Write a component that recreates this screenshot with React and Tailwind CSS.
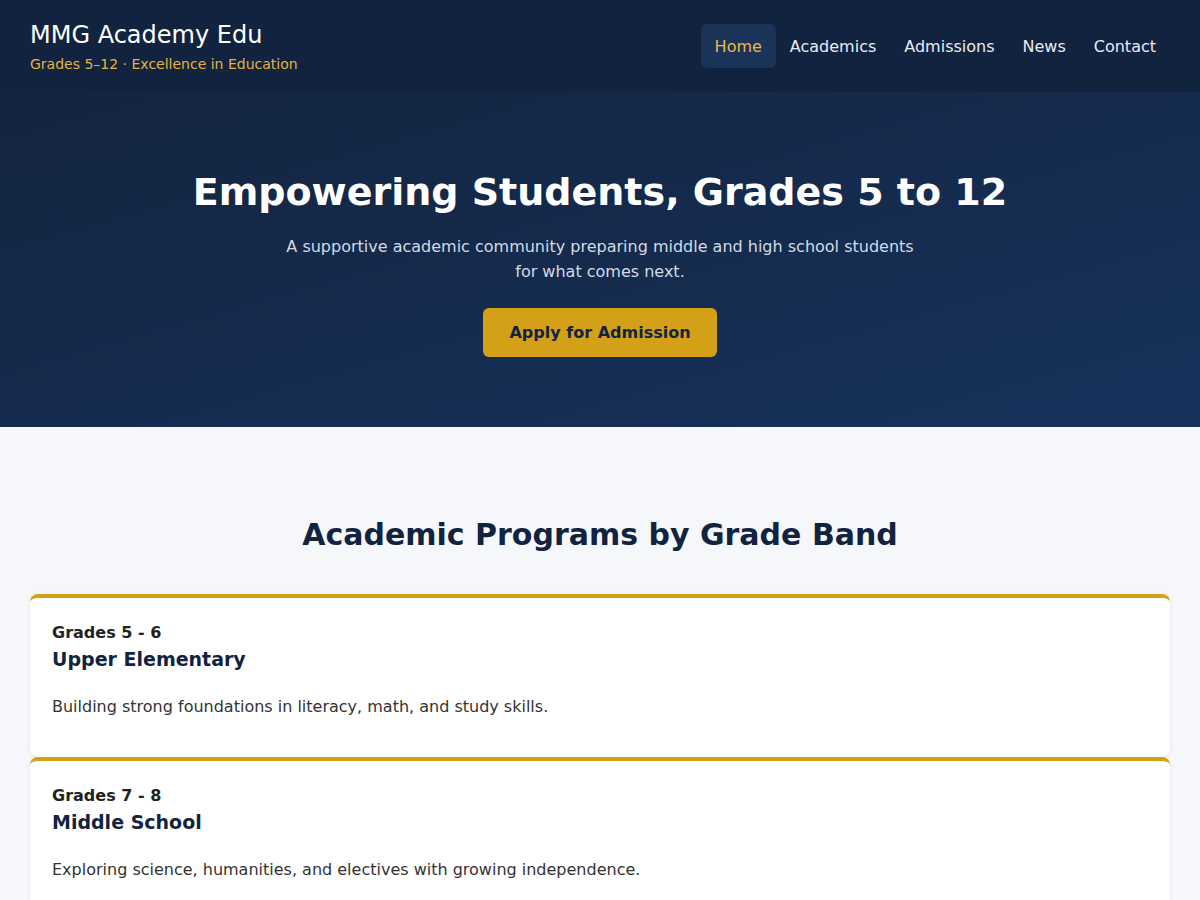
const navItems = ['Home', 'Academics', 'Admissions', 'News', 'Contact'];

const programs = [
  {
    grades: 'Grades 5 - 6',
    title: 'Upper Elementary',
    text: 'Building strong foundations in literacy, math, and study skills.',
  },
  {
    grades: 'Grades 7 - 8',
    title: 'Middle School',
    text: 'Exploring science, humanities, and electives with growing independence.',
  },
  {
    grades: 'Grades 9 - 12',
    title: 'High School',
    text: 'Rigorous college-preparatory coursework and leadership opportunities.',
  },
];

function Header() {
  return (
    <header className="flex items-start justify-between bg-[#12233f] px-[30px] h-[92px]">
      <div className="flex flex-col gap-[4px] pt-[20px]">
        <h1 className="text-[24px] leading-[30px] font-normal text-white">MMG Academy Edu</h1>
        <p className="text-[14px] leading-[20px] text-[#e3b341]">Grades 5–12 · Excellence in Education</p>
      </div>
      <nav className="flex items-center pt-[24px]">
        {navItems.map((item, i) => (
          <a
            key={item}
            href="#"
            className={`px-[14px] pt-[11px] pb-[9px] rounded-[6px] text-[16px] leading-[24px] ${
              i === 0 ? 'bg-[#1a3358] text-[#e8b94a]' : 'text-[#e8ecf2]'
            }`}
          >
            {item}
          </a>
        ))}
      </nav>
    </header>
  );
}

function Hero() {
  return (
    <section className="bg-gradient-to-br from-[#13243f] to-[#17325c] pt-[77px] pb-[70px] flex flex-col items-center text-center">
      <h2 className="text-[38px] leading-[46px] font-bold text-white">Empowering Students, Grades 5 to 12</h2>
      <p className="mt-[19px] max-w-[640px] text-[16px] leading-[25px] text-[#d3dae4]">
        A supportive academic community preparing middle and high school students for what comes next.
      </p>
      <button className="mt-[24px] bg-[#d4a017] text-[#12233f] font-bold text-[16px] leading-[24px] px-[26px] py-[12.5px] rounded-[6px]">
        Apply for Admission
      </button>
    </section>
  );
}

function ProgramCard({ grades, title, text }) {
  return (
    <div className="bg-white rounded-[8px] border-t-4 border-[#d4a017] shadow-[0_1px_4px_rgba(0,0,0,0.08)] px-[22px] pt-[23px] pb-[23px]">
      <p className="text-[16px] leading-[24px] font-bold text-[#222]">{grades}</p>
      <h3 className="text-[19px] leading-[28px] font-bold text-[#12233f]">{title}</h3>
      <p className="mt-[22px] mb-[15px] text-[16px] leading-[24px] text-[#333]">{text}</p>
    </div>
  );
}

export default function App() {
  return (
    <div className="min-h-screen bg-[#f5f7fa]" style={{ fontFamily: '"DejaVu Sans", Verdana, sans-serif' }}>
      <Header />
      <Hero />
      <section className="px-[30px] pt-[90px] pb-[64px]">
        <h2 className="text-center text-[30px] leading-[36px] font-bold text-[#12233f]">
          Academic Programs by Grade Band
        </h2>
        <div className="mt-[41px] flex flex-col">
          {programs.map((p) => (
            <ProgramCard key={p.title} {...p} />
          ))}
        </div>
      </section>
    </div>
  );
}
